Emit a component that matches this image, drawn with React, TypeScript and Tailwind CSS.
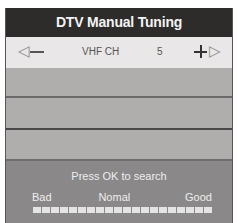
export default function App() {
  const segs = Array.from({ length: 20 });
  return (
    <div className="w-[237px] h-[223px] bg-white pt-[8px] pl-[5px] font-['Liberation_Sans',Arial,sans-serif]">
      <div className="w-[228px] h-[215px] flex flex-col border-l border-r border-[#555]">
        <div className="h-[29px] bg-[#2e2b2b] flex items-center justify-center text-[#f4f4f4] font-bold text-[14px] tracking-[-0.2px]">
          DTV Manual Tuning
        </div>
        <div className="h-[31px] bg-[#e9e7e7] relative">
          <span className="absolute left-[12px] top-[6px] text-[15px] leading-none text-[#8a8a8a]">◁</span>
          <span className="absolute left-[24px] top-[14px] w-[14px] h-[2px] bg-[#555]" />
          <span className="absolute left-[76px] top-[10px] text-[10px] leading-none text-[#555]">VHF CH</span>
          <span className="absolute left-[151px] top-[10px] text-[10px] leading-none text-[#555]">5</span>
          <span className="absolute left-[188px] top-[8px] w-[13px] h-[13px]">
            <span className="absolute left-0 top-[5.5px] w-[13px] h-[2px] bg-[#333]" />
            <span className="absolute left-[5.5px] top-0 w-[2px] h-[13px] bg-[#333]" />
          </span>
          <span className="absolute left-[203px] top-[6px] text-[15px] leading-none text-[#8a8a8a]">▷</span>
        </div>
        <div className="h-[30px] bg-[#b0adad] border-b-2 border-[#6a6868]" />
        <div className="h-[32px] bg-[#b0adad] border-b-2 border-[#4a4848]" />
        <div className="h-[31px] bg-[#b0adad] border-b-2 border-[#6f6d6d]" />
        <div className="flex-1 bg-[#8a8888] flex flex-col items-center pt-[10px]">
          <div className="text-[11px] leading-none text-[#eee]">Press OK to search</div>
          <div className="w-[180px] ml-[6px] mt-[10px] flex justify-between text-[11px] leading-none text-[#eee]">
            <span>Bad</span>
            <span className="mr-[8px]">Nomal</span>
            <span>Good</span>
          </div>
          <div className="ml-[6px] mt-[4px] flex gap-[1px]">
            {segs.map((_, i) => (
              <span key={i} className="w-[8px] h-[6px] bg-[#e4e4e4]" />
            ))}
          </div>
        </div>
      </div>
    </div>
  );
}
